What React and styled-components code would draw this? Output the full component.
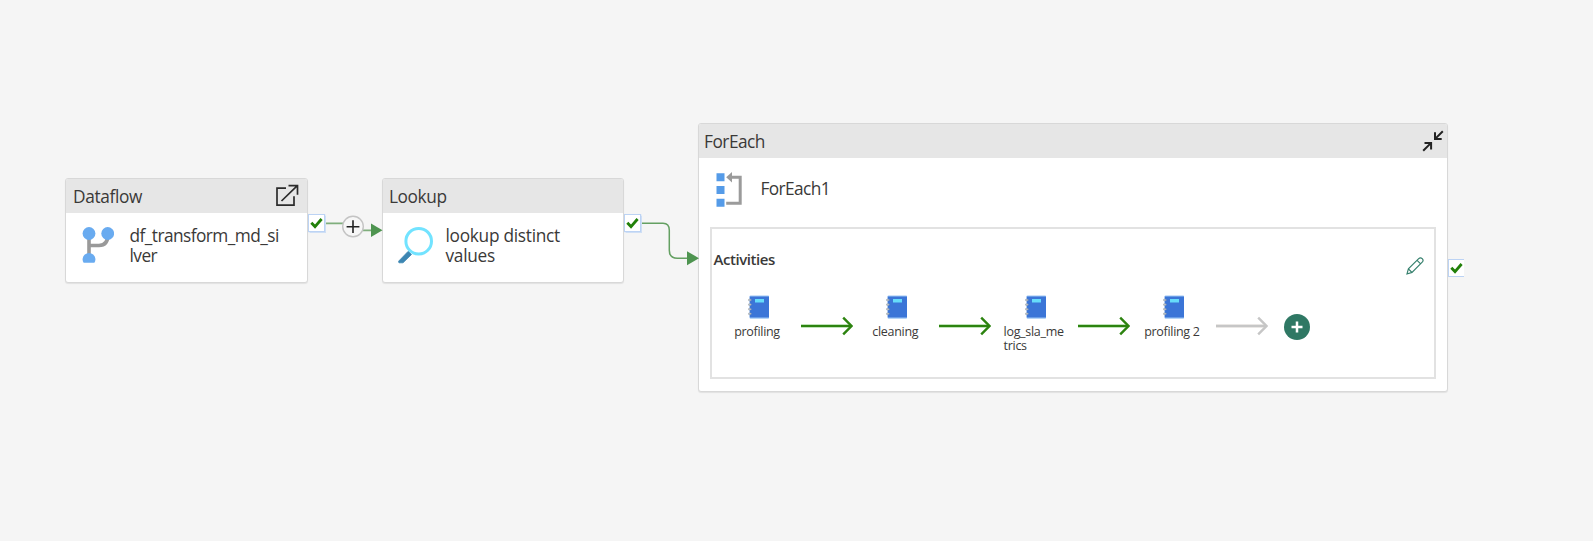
import React from "react";
import styled, { createGlobalStyle } from "styled-components";

const GlobalStyle = createGlobalStyle`
  *, *::before, *::after { box-sizing: border-box; }
  body { margin: 0; background: #f5f5f5; }
`;

const Canvas = styled.main`
  position: relative;
  width: 1593px;
  height: 541px;
  overflow: hidden;
  background: #f5f5f5;
  color: #3a3938;
  font-family: "Open Sans", "Noto Sans", sans-serif;
`;

const Node = styled.section`
  position: absolute;
  left: ${(p) => p.$x}px;
  top: ${(p) => p.$y}px;
  width: ${(p) => p.$w}px;
  height: ${(p) => p.$h}px;
  display: flex;
  flex-direction: column;
  background: #fff;
  border: 1px solid #d8d8d8;
  border-radius: 3px;
  box-shadow: 0 1px 1px rgba(0, 0, 0, 0.08);
`;

const Text = styled.span`
  font-size: ${(p) => p.$size || 17.3}px;
  font-weight: ${(p) => p.$weight || 400};
  line-height: ${(p) => p.$line || 20}px;
  letter-spacing: ${(p) => p.$track || 0}px;
  white-space: nowrap;
`;

const Header = styled.header`
  display: flex;
  align-items: center;
  justify-content: space-between;
  flex: none;
  height: 34px;
  padding: 0 ${(p) => p.$right || 8}px 0 ${(p) => p.$left || 7}px;
  background: #e6e6e6;
  border-radius: 2px 2px 0 0;
  ${Text} { padding-top: 2px; }
`;

const Body = styled.div`
  display: flex;
  align-items: flex-start;
  gap: ${(p) => p.$gap}px;
  padding: ${(p) => p.$pad};
  svg { flex: none; display: block; }
`;

const LoopName = styled.div`
  display: flex;
  padding-top: 7px;
`;

const Activities = styled.div`
  display: flex;
  flex-direction: column;
  flex: none;
  margin: 18px 11px 0 11px;
  height: 152px;
  border: 2px solid #e2e2e2;
`;

const ActivitiesTop = styled.div`
  display: flex;
  justify-content: space-between;
  height: 66px;
  padding: 20px 10px 0 1.5px;
  svg { margin-top: 7.5px; }
`;

const Flow = styled.div`
  display: flex;
  align-items: flex-start;
  padding-left: 8px;
`;

const Step = styled.div`
  display: flex;
  flex-direction: column;
  align-items: center;
  width: 74px;
  svg { display: block; margin-left: 3px; }
`;

const StepLabel = styled.div`
  display: flex;
  flex-direction: column;
  align-items: flex-start;
  margin-top: 6px;
`;

const StepArrow = styled.svg`
  display: block;
  width: 52px;
  height: 20px;
  margin: 20.5px ${(p) => p.$after}px 0 7px;
  color: ${(p) => p.$color};
`;

const AddButton = styled.button`
  display: flex;
  align-items: center;
  justify-content: center;
  width: 26px;
  height: 26px;
  margin-top: 18.5px;
  padding: 0;
  border: 0;
  border-radius: 50%;
  background: #2f7864;
`;

const Badge = styled.div`
  position: absolute;
  left: ${(p) => p.$x}px;
  top: ${(p) => p.$y}px;
  width: ${(p) => (p.$cut ? 16 : 17)}px;
  height: 18px;
  display: flex;
  align-items: center;
  justify-content: center;
  background: #fff;
  border: 1px solid #bcd3f4;
  border-right-width: ${(p) => (p.$cut ? 0 : 1)}px;
  box-shadow: ${(p) => (p.$cut ? "none" : "0 0 1px 0.5px #cfdff5")};
`;

const Wires = styled.svg`
  position: absolute;
  inset: 0;
`;

const CheckBadge = ({ x, y, cut }) => (
  <Badge $x={x} $y={y} $cut={cut}>
    <svg width="13" height="12" viewBox="0 0 13 12">
      <path d="M1.3 5.8 5 9.6 11.6 2" fill="none" stroke="#218009" strokeWidth="2.8" />
    </svg>
  </Badge>
);

const OpenIcon = () => (
  <svg width="24" height="24" viewBox="0 0 24 24" fill="none" stroke="#2b2b2b" strokeWidth="1.7">
    <path d="M11 4.2H2v17h17v-9M6.5 17 21.8 2.2M13.5 1.7h9v9" />
  </svg>
);

const CollapseIcon = () => (
  <svg width="22" height="22" viewBox="0 0 22 22" fill="none" stroke="#222" strokeWidth="2">
    <path d="M1.2 20.8 8.6 13.4M2.5 13h6.6v6.6M20.8 1.2 13.4 8.6M13 2.3v6.7h6.7" />
  </svg>
);

const BranchIcon = () => (
  <svg width="32" height="38" viewBox="0 0 32 38">
    <path d="M7 8v20M26 8c0 8-3 11.500-9 11.500H7" fill="none" stroke="#999" strokeWidth="3.6" />
    <circle cx="7" cy="7.500" r="6.400" fill="#69abf0" />
    <circle cx="25.700" cy="7.500" r="6.400" fill="#69abf0" />
    <path d="M1.600 36.800a6.400 6.400 0 1 1 10.800 0z" fill="#69abf0" />
  </svg>
);

const SearchIcon = () => (
  <svg width="36" height="38" viewBox="0 0 36 38">
    <path d="M0.300 35.500 10.200 25.300l3.300 3.200L5 36.800H1z" fill="#3c86b2" stroke="#3c86b2" strokeWidth="0.800" strokeLinejoin="round" />
    <circle cx="20.700" cy="15.200" r="12.800" fill="#fff" stroke="#72e3ff" strokeWidth="3" />
  </svg>
);

const LoopIcon = () => (
  <svg width="27" height="37" viewBox="0 0 27 37">
    <path d="M0.500 1.200h8v8h-8zM0.500 13.900h8v8h-8zM0.500 26.700h8v8h-8z" fill="#559be8" />
    <path d="M15 5.200h9.200v26H10.200" fill="none" stroke="#9b9b9b" strokeWidth="3" />
    <path d="m10.200 5.200 5.800-5.200v10.400z" fill="#9b9b9b" />
  </svg>
);

const PencilIcon = () => (
  <svg width="18" height="18" viewBox="0 0 18 18" fill="none" stroke="#347f6c" strokeWidth="1.150">
    <path d="m1 16.900 1.400-5L12.700 1.700a2.400 2.400 0 0 1 3.500 3.500L6 15.500zM2.400 11.900l3.600 3.600M11.100 3.300l3.500 3.500" />
  </svg>
);

const NotebookIcon = () => (
  <svg width="21" height="24" viewBox="0 0 21 24">
    <rect x="1.700" y="0.500" width="19.300" height="23.200" rx="0.800" fill="#9dc6f4" />
    <rect x="1.700" y="1.500" width="19.300" height="21" fill="#3b75d7" />
    <rect x="7" y="4" width="9" height="3.500" fill="#66dcfa" />
    <g fill="#c4c9d0" stroke="#8c969f" strokeWidth="0.500">
      {[5, 9.6, 14.2, 18.8].map((y) => (
        <rect key={y} x="0.300" y={y - 0.8} width="3" height="1.600" rx="0.800" />
      ))}
    </g>
  </svg>
);

const Arrow = ({ color, halo, after }) => (
  <StepArrow $color={color} $after={after} viewBox="0 0 52 20">
    <path d="M0 10h49" fill="none" stroke={halo} strokeWidth="4" />
    <path d="M0 10h50" fill="none" stroke="currentColor" strokeWidth="2" />
    <path d="M42.200 1.600l8.300 8.400-8.300 8.400" fill="none" stroke="currentColor" strokeWidth="2.400" />
  </StepArrow>
);

const steps = [["profiling"], ["cleaning"], ["log_sla_me", "trics"], ["profiling 2"]];

export default function App() {
  return (
    <>
      <GlobalStyle />
      <Canvas>
        <Node $x={65} $y={178} $w={243} $h={105}>
          <Header>
            <Text $track={-0.35}>Dataflow</Text>
            <OpenIcon />
          </Header>
          <Body $gap={16} $pad="13px 0 0 15.5px">
            <BranchIcon />
            <Text $track={-0.55}>df_transform_md_si<br />lver</Text>
          </Body>
        </Node>

        <Node $x={382} $y={178} $w={242} $h={105}>
          <Header $left={6}>
            <Text $track={-0.4}>Lookup</Text>
          </Header>
          <Body $gap={12} $pad="13px 0 0 14.5px">
            <SearchIcon />
            <Text $track={-0.28}>lookup distinct<br />values</Text>
          </Body>
        </Node>

        <Node $x={698} $y={123} $w={750} $h={269}>
          <Header $left={5} $right={3}>
            <Text $track={-0.5}>ForEach</Text>
            <CollapseIcon />
          </Header>
          <Body $gap={17.5} $pad="14px 0 0 17px">
            <LoopIcon />
            <LoopName><Text $track={-0.6}>ForEach1</Text></LoopName>
          </Body>
          <Activities>
            <ActivitiesTop>
              <Text $size={15} $weight={600} $track={-0.45}>Activities</Text>
              <PencilIcon />
            </ActivitiesTop>
            <Flow>
              {steps.map((lines, i) => (
                <React.Fragment key={lines[0]}>
                  <Step>
                    <NotebookIcon />
                    <StepLabel>
                      {lines.map((t) => (
                        <Text key={t} $size={12.5} $line={14} $track={-0.3}>{t}</Text>
                      ))}
                    </StepLabel>
                  </Step>
                  <Arrow
                    after={i === 3 ? 16 : 5.3}
                    color={i === 3 ? "#c6c6c6" : "#2c830f"}
                    halo={i === 3 ? "#e9e7e5" : "#bfe3b8"}
                  />
                </React.Fragment>
              ))}
              <AddButton aria-label="Add activity">
                <svg width="12" height="12" viewBox="0 0 12 12">
                  <path d="M6 0.500v11M0.500 6h11" stroke="#fff" strokeWidth="2.500" />
                </svg>
              </AddButton>
            </Flow>
          </Activities>
        </Node>

        <Wires width="1593" height="541" viewBox="0 0 1593 541">
          <path d="M325 223.300h19M363 230.300h9" stroke="#7fae7c" strokeWidth="1.700" />
          <path d="m371 223.500 11.500 6.800-11.500 6.800z" fill="#4e9450" />
          <circle cx="353" cy="226.500" r="10.300" fill="#f7f7f7" stroke="#c4c4c4" strokeWidth="1.400" />
          <path d="M353 220.300v12.800M346.600 226.700h12.800" stroke="#222" strokeWidth="1.600" />
          <path d="M641 223.200h22q6.300 0 6.300 7v20q0 8 8 8h11" fill="none" stroke="#64a062" strokeWidth="1.500" />
          <path d="m687 251.200 12 7-12 7z" fill="#4e9450" />
        </Wires>

        <CheckBadge x={308} y={214} />
        <CheckBadge x={624} y={214} />
        <CheckBadge x={1448} y={259} cut />
      </Canvas>
    </>
  );
}
